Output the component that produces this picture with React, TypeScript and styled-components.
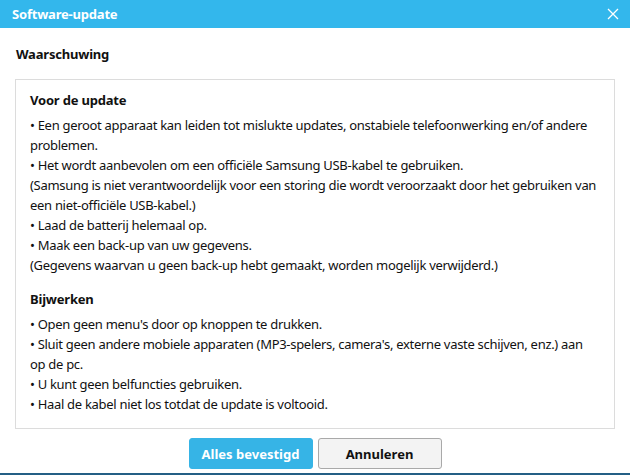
import { FC } from 'react';
import styled, { createGlobalStyle } from 'styled-components';

const GlobalStyle = createGlobalStyle`
	html, body {
		margin: 0;
		padding: 0;
		background: #ffffff;
	}
	* {
		box-sizing: border-box;
	}
`;

const Window = styled.div`
	width: 630px;
	height: 475px;
	display: flex;
	flex-direction: column;
	background: #ffffff;
	font-family: 'Noto Sans', 'Open Sans', sans-serif;
	color: #111;
	border-bottom: 2px solid #245f85;
	overflow: hidden;
`;

const TitleBar = styled.div`
	height: 28px;
	flex-shrink: 0;
	display: flex;
	align-items: center;
	justify-content: space-between;
	padding: 0 10px 0 12px;
	background: #33b7ec;
	color: #ffffff;
`;

const TitleText = styled.span`
	font-size: 13px;
	font-weight: 700;
	letter-spacing: -0.2px;
`;

const CloseButton = styled.button`
	border: 0;
	background: transparent;
	padding: 0;
	width: 14px;
	height: 14px;
	display: flex;
	align-items: center;
	justify-content: center;
	cursor: pointer;
`;

const Body = styled.div`
	flex: 1;
	display: flex;
	flex-direction: column;
	padding: 16px 15px 0 15px;
`;

const Heading = styled.h2`
	margin: 0 0 15px 1px;
	font-size: 13px;
	font-weight: 700;
	line-height: 20px;
	letter-spacing: -0.2px;
`;

const Notice = styled.div`
	border: 1px solid #dcdcdc;
	padding: 10px 14px 14px 14px;
	width: 600px;
`;

const Section = styled.section<{ $last?: boolean }>`
	margin-bottom: ${({ $last }) => ($last ? '0' : '14px')};
`;

const SectionTitle = styled.h3`
	margin: 0 0 5px;
	font-size: 13px;
	font-weight: 700;
	line-height: 20px;
	letter-spacing: -0.2px;
`;

const Line = styled.p`
	margin: 0;
	font-size: 13px;
	line-height: 20px;
	letter-spacing: -0.3px;
	white-space: nowrap;
`;

const Actions = styled.div`
	display: flex;
	justify-content: center;
	gap: 5px;
	margin-top: 9px;
`;

const Button = styled.button<{ $primary?: boolean }>`
	width: 124px;
	height: 31px;
	border-radius: 3px;
	font-family: inherit;
	font-size: 13px;
	font-weight: 700;
	cursor: pointer;
	border: 1px solid ${({ $primary }) => ($primary ? '#36b4e6' : '#a9a9a9')};
	background: ${({ $primary }) => ($primary ? '#36b4e6' : '#f3f3f3')};
	color: ${({ $primary }) => ($primary ? '#ffffff' : '#111111')};
`;

const before = [
	'• Een geroot apparaat kan leiden tot mislukte updates, onstabiele telefoonwerking en/of andere',
	'problemen.',
	'• Het wordt aanbevolen om een officiële Samsung USB-kabel te gebruiken.',
	'(Samsung is niet verantwoordelijk voor een storing die wordt veroorzaakt door het gebruiken van',
	'een niet-officiële USB-kabel.)',
	'• Laad de batterij helemaal op.',
	'• Maak een back-up van uw gegevens.',
	'(Gegevens waarvan u geen back-up hebt gemaakt, worden mogelijk verwijderd.)',
];

const updating = [
	"• Open geen menu's door op knoppen te drukken.",
	"• Sluit geen andere mobiele apparaten (MP3-spelers, camera's, externe vaste schijven, enz.) aan",
	'op de pc.',
	'• U kunt geen belfuncties gebruiken.',
	'• Haal de kabel niet los totdat de update is voltooid.',
];

const App: FC = () => (
	<>
		<GlobalStyle />
		<Window>
			<TitleBar>
				<TitleText>Software-update</TitleText>
				<CloseButton aria-label="Sluiten">
					<svg width="12" height="12" viewBox="0 0 12 12">
						<path d="M1 1 L11 11 M11 1 L1 11" stroke="#ffffff" strokeWidth="1.3" />
					</svg>
				</CloseButton>
			</TitleBar>
			<Body>
				<Heading>Waarschuwing</Heading>
				<Notice>
					<Section>
						<SectionTitle>Voor de update</SectionTitle>
						{before.map((line) => (
							<Line key={line}>{line}</Line>
						))}
					</Section>
					<Section $last>
						<SectionTitle>Bijwerken</SectionTitle>
						{updating.map((line) => (
							<Line key={line}>{line}</Line>
						))}
					</Section>
				</Notice>
				<Actions>
					<Button $primary>Alles bevestigd</Button>
					<Button>Annuleren</Button>
				</Actions>
			</Body>
		</Window>
	</>
);

export default App;
